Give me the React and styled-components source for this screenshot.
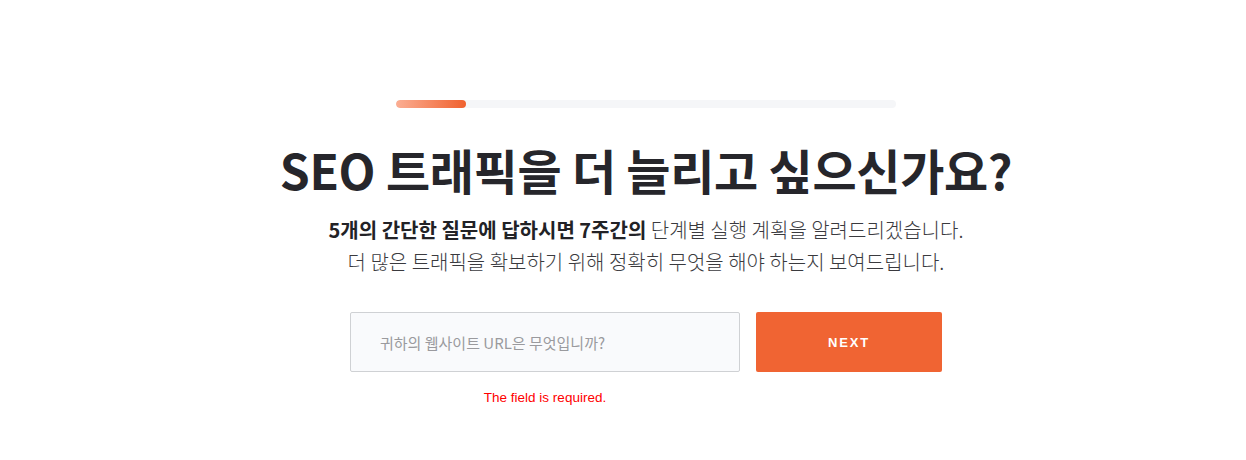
import React from "react";
import styled, { createGlobalStyle } from "styled-components";

const GlobalStyle = createGlobalStyle`
  html, body {
    margin: 0;
    padding: 0;
    background: #ffffff;
  }
  body {
    font-family: "Noto Sans CJK KR", "Noto Sans", sans-serif;
  }
`;

const Page = styled.div`
  width: 1246px;
  height: 460px;
  box-sizing: border-box;
  padding-top: 100px;
  padding-left: 46px;
  display: flex;
  flex-direction: column;
  align-items: center;
`;

const Track = styled.div`
  width: 500px;
  height: 8px;
  border-radius: 4px;
  background: #f5f6f8;
  overflow: hidden;
`;

const Fill = styled.div`
  height: 100%;
  border-radius: 4px;
  background: linear-gradient(90deg, #fbae93 0%, #f0612e 100%);
`;

const Title = styled.h1`
  margin: 29px 0 0;
  font-family: "Noto Sans CJK KR", sans-serif;
  font-weight: 700;
  font-size: 48px;
  line-height: 64px;
  letter-spacing: -0.3px;
  color: #26262b;
  white-space: nowrap;
`;

const Lead = styled.p`
  margin: 13px 0 0;
  text-align: center;
  font-family: "Noto Sans CJK KR", sans-serif;
  font-size: 20px;
  font-weight: 300;
  line-height: 32px;
  color: #3a3a3e;
  white-space: nowrap;
  b {
    font-weight: 700;
    color: #222226;
  }
`;

const Form = styled.form`
  margin-top: 34px;
  display: flex;
  gap: 16px;
`;

const Field = styled.div`
  display: flex;
  flex-direction: column;
  align-items: center;
`;

const Input = styled.input`
  width: 390px;
  height: 60px;
  box-sizing: border-box;
  border: 1px solid #cfd1d4;
  border-radius: 2px;
  background: #f9fafc;
  padding: 0 29px;
  font-family: "Noto Sans CJK KR", sans-serif;
  font-size: 15px;
  color: #333;
  outline: none;
  &::placeholder {
    color: #9a9a9e;
  }
`;

const Error = styled.div`
  margin-top: 18px;
  font-family: "Liberation Sans", Arial, sans-serif;
  font-size: 13.5px;
  color: #ff0000;
`;

const Button = styled.button`
  width: 186px;
  height: 60px;
  border: none;
  border-radius: 2px;
  background: #f06433;
  color: #ffffff;
  font-family: "Liberation Sans", Arial, sans-serif;
  font-weight: 700;
  font-size: 13px;
  letter-spacing: 1.8px;
  cursor: pointer;
`;

export default function App() {
  const progress = 14;
  return (
    <>
      <GlobalStyle />
      <Page>
        <Track>
          <Fill style={{ width: `${progress}%` }} />
        </Track>
        <Title>SEO 트래픽을 더 늘리고 싶으신가요?</Title>
        <Lead>
          <b>5개의 간단한 질문에 답하시면 7주간의</b> 단계별 실행 계획을 알려드리겠습니다.
          <br />
          더 많은 트래픽을 확보하기 위해 정확히 무엇을 해야 하는지 보여드립니다.
        </Lead>
        <Form onSubmit={(e) => e.preventDefault()}>
          <Field>
            <Input placeholder="귀하의 웹사이트 URL은 무엇입니까?" />
            <Error>The field is required.</Error>
          </Field>
          <Button type="submit">NEXT</Button>
        </Form>
      </Page>
    </>
  );
}
